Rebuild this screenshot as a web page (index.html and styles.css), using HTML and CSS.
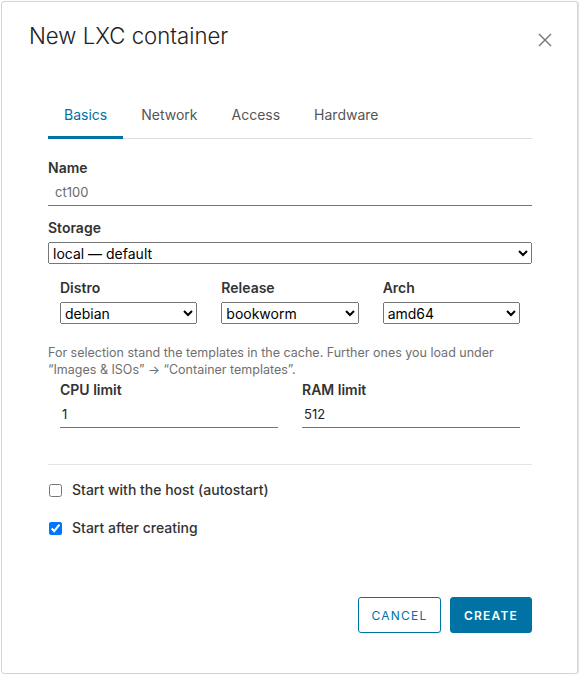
FILE: index.html
```html
<!DOCTYPE html>
<html lang="en">
<head>
  <meta charset="UTF-8">
  <title>New LXC container</title>
  <link rel="stylesheet" href="styles.css">
</head>
<body>
  <div class="modal">
    <header class="modal-header">
      <h1 class="modal-title">New LXC container</h1>
      <button class="close-btn" aria-label="Close">
        <svg width="14" height="14" viewBox="0 0 14 14">
          <path d="M1 1 L13 13 M13 1 L1 13" stroke="#747474" stroke-width="1.4" fill="none"/>
        </svg>
      </button>
    </header>

    <div class="modal-body">
      <nav class="tabs">
        <span class="tab active">Basics</span>
        <span class="tab">Network</span>
        <span class="tab">Access</span>
        <span class="tab">Hardware</span>
      </nav>

      <div class="field first">
        <label class="field-label">Name</label>
        <input class="line-input muted" type="text" value="ct100">
      </div>

      <div class="field">
        <label class="field-label for-select">Storage</label>
        <select class="select wide">
          <option>local — default</option>
        </select>
      </div>

      <div class="row three">
        <div class="field">
          <label class="field-label for-select">Distro</label>
          <select class="select"><option>debian</option></select>
        </div>
        <div class="field">
          <label class="field-label for-select">Release</label>
          <select class="select"><option>bookworm</option></select>
        </div>
        <div class="field">
          <label class="field-label for-select">Arch</label>
          <select class="select"><option>amd64</option></select>
        </div>
      </div>

      <p class="hint">For selection stand the templates in the cache. Further ones you load under “Images &amp; ISOs” → “Container templates”.</p>

      <div class="row two">
        <div class="field">
          <label class="field-label">CPU limit</label>
          <input class="line-input" type="text" value="1">
        </div>
        <div class="field">
          <label class="field-label">RAM limit</label>
          <input class="line-input" type="text" value="512">
        </div>
      </div>

      <hr class="divider">

      <label class="check">
        <input type="checkbox">
        <span>Start with the host (autostart)</span>
      </label>
      <label class="check">
        <input type="checkbox" checked>
        <span>Start after creating</span>
      </label>
    </div>

    <footer class="modal-footer">
      <button class="btn btn-outline">Cancel</button>
      <button class="btn btn-primary">Create</button>
    </footer>
  </div>
</body>
</html>
```

FILE: styles.css
```css
* {
  box-sizing: border-box;
}

body {
  margin: 0;
  background: #fff;
  font-family: "Inter", "Noto Sans", sans-serif;
  color: #333;
}

.modal {
  margin: 1px 2px 1px 1px;
  height: 673px;
  border: 1px solid #d4d4d4;
  border-radius: 3px;
  box-shadow: 1px 0 1px rgba(0, 0, 0, 0.12);
  display: flex;
  flex-direction: column;
  padding: 0 45px 0 46px;
}

/* Header */
.modal-header {
  display: flex;
  justify-content: space-between;
  align-items: flex-start;
  margin-left: -19px;
  padding-top: 20px;
}

.modal-title {
  margin: 0;
  font-size: 22.2px;
  font-weight: 300;
  color: #222;
  line-height: 28px;
}

.close-btn {
  background: none;
  border: none;
  padding: 0;
  margin: 11px -20px 0 0;
  cursor: pointer;
  line-height: 0;
}

/* Tabs */
.tabs {
  display: flex;
  margin-top: 50px;
  border-bottom: 1px solid #ddd;
}

.tab {
  padding: 6px 16px 13px;
  font-size: 14px;
  line-height: 17px;
  color: #565656;
  margin-right: 2px;
  border-bottom: 3px solid transparent;
  margin-bottom: -1px;
}

.tab.active {
  color: #0072a3;
  border-bottom-color: #0072a3;
}

/* Fields */
.field {
  display: flex;
  flex-direction: column;
  margin-top: 13px;
}

.field.first {
  margin-top: 20px;
}

.field-label {
  font-size: 14px;
  font-weight: 600;
  color: #333;
  line-height: 18px;
  margin-bottom: 6px;
}

.field-label.for-select {
  margin-bottom: 5px;
}

.line-input {
  height: 25px;
  margin-top: -2px;
  border: none;
  border-bottom: 1px solid #5f7b88;
  font: inherit;
  font-size: 13px;
  color: #222;
  padding: 2px 2px 4px;
  outline: none;
  background: transparent;
}

.line-input.muted {
  color: #6a6a6a;
  padding-left: 7px;
}

.select {
  font-family: inherit;
  font-size: 14px;
  height: 22px;
  width: 100%;
  margin: 0;
  color: #000;
}

.row {
  display: grid;
  gap: 24px;
  padding: 0 12px;
}

.row.three {
  grid-template-columns: repeat(3, 1fr);
}

.row.three .field {
  margin-top: 15px;
}

.row.two {
  grid-template-columns: repeat(2, 1fr);
}

.row.two .field {
  margin-top: 3px;
}

.hint {
  margin: 20px 0 0;
  max-width: 470px;
  font-size: 12.5px;
  line-height: 17px;
  color: #6f6f6f;
}

.divider {
  border: none;
  border-top: 1px solid #e4e4e4;
  margin: 36px 0 0;
}

/* Checkboxes */
.check {
  display: flex;
  align-items: center;
  gap: 10px;
  font-size: 14px;
  font-weight: 500;
  line-height: 20px;
  color: #333;
  margin-top: 15px;
}

.check + .check {
  margin-top: 18px;
}

.check input {
  margin: 0 0 0 1px;
  width: 13px;
  height: 13px;
}

/* Footer */
.modal-footer {
  display: flex;
  justify-content: flex-end;
  gap: 9px;
  margin-top: auto;
  padding-bottom: 40px;
}

.btn {
  height: 36px;
  padding: 0 12px;
  border-radius: 3px;
  font-family: inherit;
  font-size: 12px;
  letter-spacing: 1.2px;
  text-transform: uppercase;
  cursor: pointer;
}

.btn-outline {
  background: #fff;
  border: 1px solid #0072a3;
  color: #0072a3;
  width: 83px;
}

.btn-primary {
  background: #0072a3;
  border: 1px solid #0072a3;
  color: #fff;
  font-weight: 600;
  width: 82px;
}
```
